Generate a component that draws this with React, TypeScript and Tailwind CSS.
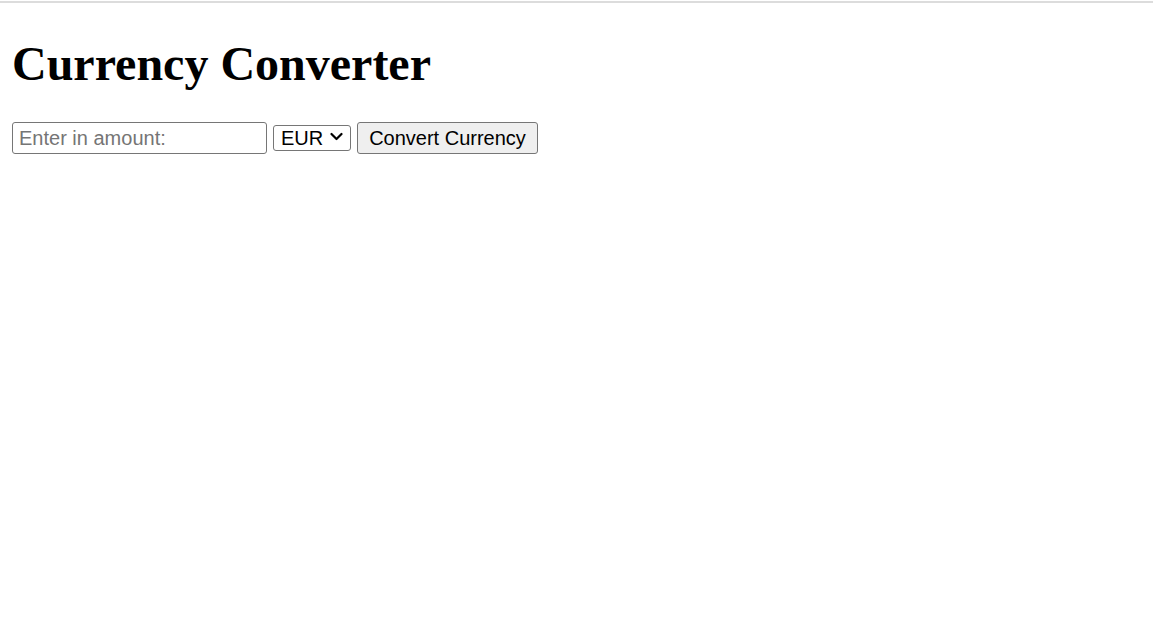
import { useState } from "react";

const App = () => {
  const [amount, setAmount] = useState("");
  const [currency, setCurrency] = useState("EUR");

  return (
    <div className="min-h-screen bg-white">
      <div className="mt-px border-t-2 border-[#dcdcdc]" />
      <div className="px-3">
        <h1 className="mt-[33px] mb-0 text-[48px] leading-[55px] font-bold text-black font-['Liberation_Serif',serif]">
          Currency Converter
        </h1>

        <form
          onSubmit={(e) => e.preventDefault()}
          className="mt-[31px] flex items-center gap-[6px] font-['Liberation_Sans',Arial,sans-serif] text-[20px] text-black"
        >
          <input
            type="text"
            value={amount}
            onChange={(e) => setAmount(e.target.value)}
            placeholder="Enter in amount:"
            className="w-[255px] h-[32px] px-[6px] border border-[#767676] rounded-[3px] bg-white text-[20px] leading-none placeholder:text-[#757575] outline-none"
          />

          {/* Select with a drawn chevron like the native one */}
          <div className="relative">
            <select
              value={currency}
              onChange={(e) => setCurrency(e.target.value)}
              className="appearance-none w-[78px] h-[26px] pl-[7px] pr-[22px] border border-[#767676] rounded-[3px] bg-white text-[20px] leading-none text-black outline-none"
            >
              <option value="EUR">EUR</option>
              <option value="USD">USD</option>
              <option value="GBP">GBP</option>
              <option value="JPY">JPY</option>
            </select>
            <svg
              className="pointer-events-none absolute right-[8px] top-[9px]"
              width="13"
              height="9"
              viewBox="0 0 13 9"
              fill="none"
            >
              <path
                d="M1.5 2 L6.5 7 L11.5 2"
                stroke="#000"
                strokeWidth="2.2"
                strokeLinecap="round"
                strokeLinejoin="round"
              />
            </svg>
          </div>

          <button
            type="submit"
            className="w-[181px] h-[32px] border border-[#767676] rounded-[3px] bg-[#efefef] text-[20px] leading-none text-black"
          >
            Convert Currency
          </button>
        </form>
      </div>
    </div>
  );
};

export default App;
